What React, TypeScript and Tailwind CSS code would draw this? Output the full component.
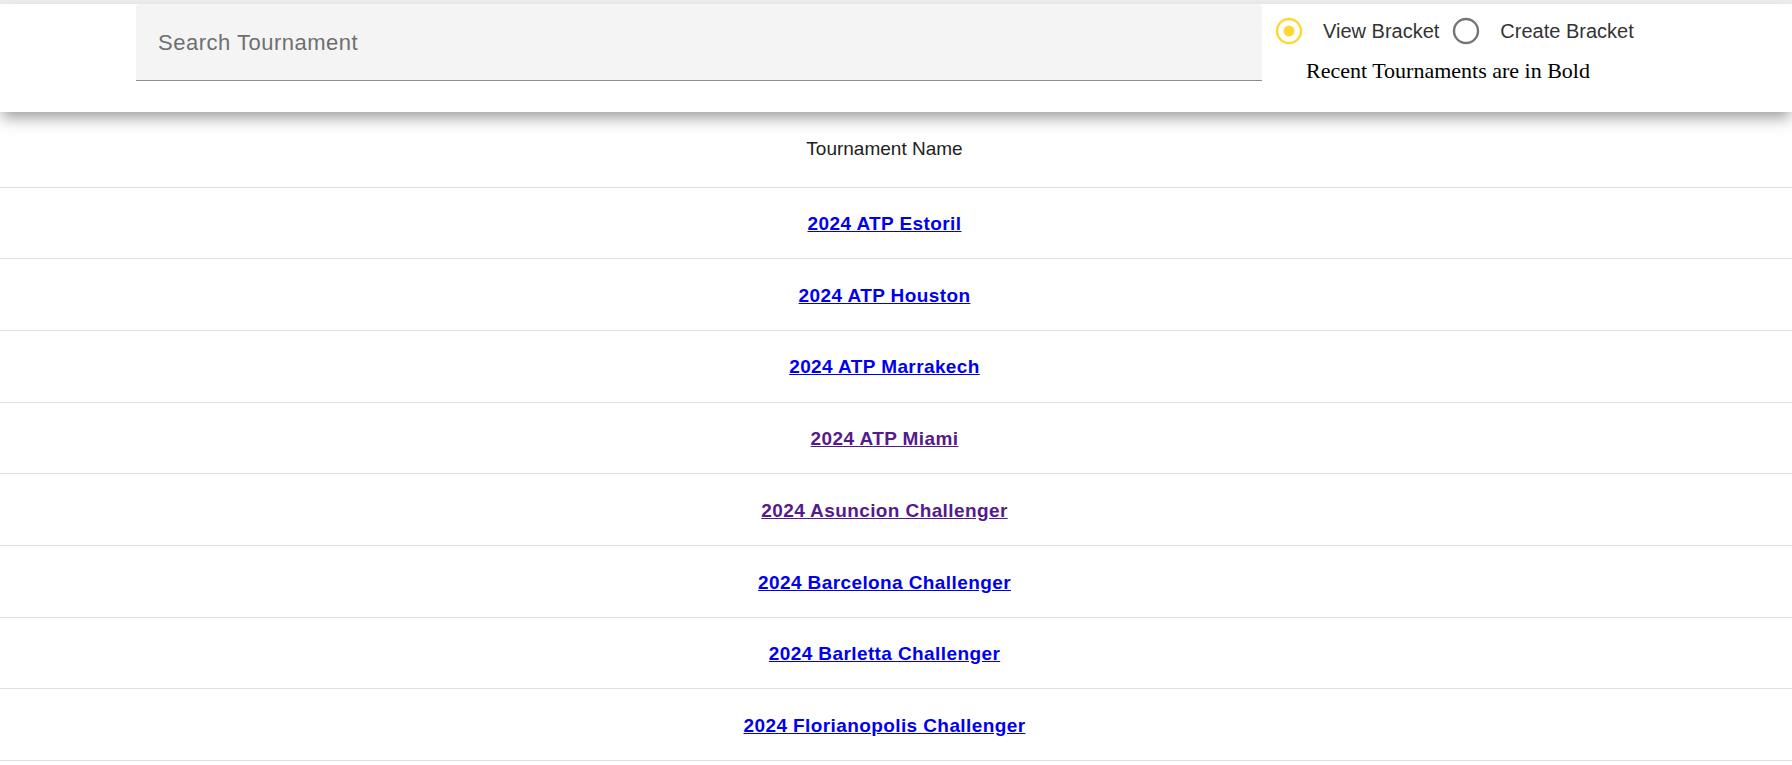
import React from "react";

const rows: { name: string; visited?: boolean }[] = [
  { name: "2024 ATP Estoril" },
  { name: "2024 ATP Houston" },
  { name: "2024 ATP Marrakech" },
  { name: "2024 ATP Miami", visited: true },
  { name: "2024 Asuncion Challenger", visited: true },
  { name: "2024 Barcelona Challenger" },
  { name: "2024 Barletta Challenger" },
  { name: "2024 Florianopolis Challenger" },
];

function Radio({ checked }: { checked?: boolean }) {
  return (
    <svg width="30" height="30" viewBox="0 0 30 30">
      <circle
        cx="15"
        cy="15"
        r="12"
        fill="none"
        stroke={checked ? "#fdd835" : "#757575"}
        strokeWidth="2.4"
      />
      {checked && <circle cx="15" cy="15" r="5.5" fill="#fdd835" />}
    </svg>
  );
}

export default function App() {
  return (
    <div className="min-h-screen bg-white font-['Liberation_Sans',Arial,sans-serif]">
      <div className="h-[4px] bg-[#eeeeee]" />
      <header className="relative z-10 flex h-[108px] bg-white shadow-[0_8px_14px_-2px_rgba(0,0,0,0.38)]">
        <div className="ml-[136px] w-[1126px]">
          <div className="flex h-[77px] items-center rounded-t-[4px] border-b border-[#8c8c8c] bg-[#f4f4f4] pl-[22px] text-[22px] tracking-[0.5px] text-[#6f6f6f]">
            Search Tournament
          </div>
        </div>
        <div className="flex flex-col pl-[12px] pt-[12px]">
          <div className="flex items-center text-[20px] text-[#333]">
            <Radio checked />
            <span className="ml-[19px]">View Bracket</span>
            <span className="ml-[12px] flex">
              <Radio />
            </span>
            <span className="ml-[19px]">Create Bracket</span>
          </div>
          <div className="ml-[32px] mt-[8px] font-['Liberation_Serif',serif] text-[22px] text-black">
            Recent Tournaments are in Bold
          </div>
        </div>
      </header>
      <table className="w-full border-collapse">
        <thead>
          <tr className="h-[75px] border-b border-[#e0e0e0]">
            <th className="pr-[23px] text-center text-[19px] font-normal text-[#222]">Tournament Name</th>
          </tr>
        </thead>
        <tbody>
          {rows.map((r) => (
            <tr key={r.name} className="h-[71.7px] border-b border-[#e0e0e0]">
              <td className="pr-[23px] pt-[3px] text-center">
                <a
                  href="#"
                  className={`text-[19px] font-bold tracking-[0.4px] underline ${
                    r.visited ? "text-[#551a8b]" : "text-[#0000ee]"
                  }`}
                >
                  {r.name}
                </a>
              </td>
            </tr>
          ))}
        </tbody>
      </table>
    </div>
  );
}
